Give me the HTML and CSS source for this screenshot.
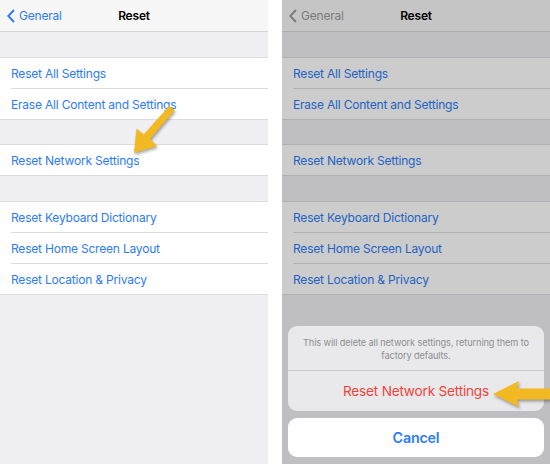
FILE: index.html
```html
<!DOCTYPE html>
<html lang="en">
<head>
    <meta charset="UTF-8">
    <meta name="viewport" content="width=device-width, initial-scale=1.0">
    <title>Reset</title>
    <link rel="stylesheet" href="styles.css">
</head>
<body>
    <div class="screens">
        <!-- before: settings list with arrow -->
        <div class="phone">
            <header class="nav">
                <a class="back" href="#">
                    <svg class="chevron" viewBox="0 0 8 14"><path d="M7 1 L1.3 7 L7 13" /></svg>
                    General
                </a>
                <h1 class="title">Reset</h1>
            </header>
            <div class="gap"></div>
            <ul class="group">
                <li>Reset All Settings</li>
                <li>Erase All Content and Settings</li>
            </ul>
            <div class="gap short"></div>
            <ul class="group">
                <li>Reset Network Settings</li>
            </ul>
            <div class="gap"></div>
            <ul class="group">
                <li>Reset Keyboard Dictionary</li>
                <li>Reset Home Screen Layout</li>
                <li>Reset Location &amp; Privacy</li>
            </ul>
            <svg class="pointer pointer-down" viewBox="125 100 55 60">
                <polygon points="169.3,105.7 174.7,110.3 150,139 157,146 134,153 136.5,128.5 143.6,134.6" />
            </svg>
        </div>

        <!-- after: action sheet open -->
        <div class="phone dimmed">
            <header class="nav">
                <a class="back" href="#">
                    <svg class="chevron" viewBox="0 0 8 14"><path d="M7 1 L1.3 7 L7 13" /></svg>
                    General
                </a>
                <h1 class="title">Reset</h1>
            </header>
            <div class="gap"></div>
            <ul class="group">
                <li>Reset All Settings</li>
                <li>Erase All Content and Settings</li>
            </ul>
            <div class="gap short"></div>
            <ul class="group">
                <li>Reset Network Settings</li>
            </ul>
            <div class="gap"></div>
            <ul class="group">
                <li>Reset Keyboard Dictionary</li>
                <li>Reset Home Screen Layout</li>
                <li>Reset Location &amp; Privacy</li>
            </ul>

            <div class="shade"></div>
            <div class="sheet">
                <div class="sheet-card">
                    <p class="sheet-message">This will delete all network settings, returning them to factory defaults.</p>
                    <button class="sheet-button danger">Reset Network Settings</button>
                </div>
                <div class="sheet-card">
                    <button class="sheet-button cancel">Cancel</button>
                </div>
            </div>
            <svg class="pointer pointer-left" viewBox="490 376 60 36">
                <polygon points="493,394 519,381 517,388.5 550,388.5 550,399.5 517,399.5 519,407" />
            </svg>
        </div>
    </div>
</body>
</html>
```

FILE: styles.css
```css
body {
    font-family: 'Inter', 'Liberation Sans', sans-serif;
    margin: 0;
    padding: 0;
    background-color: #ffffff;
}
.screens {
    display: flex;
    gap: 14px;
    height: 464px;
}
.phone {
    position: relative;
    width: 268px;
    height: 464px;
    background-color: #efeff4;
    overflow: hidden;
}
.nav {
    display: grid;
    grid-template-columns: 1fr auto 1fr;
    align-items: center;
    height: 31px;
    background-color: #f7f7f8;
    border-bottom: 1px solid #d6d6da;
}
.back {
    display: flex;
    align-items: center;
    gap: 4px;
    padding-left: 7px;
    color: #2d7cf6;
    text-decoration: none;
    font-size: 12px;
    letter-spacing: -0.2px;
}
.chevron {
    width: 8px;
    height: 14px;
    fill: none;
    stroke: #2d7cf6;
    stroke-width: 2;
}
.dimmed .back {
    color: #9a9a9c;
}
.dimmed .chevron {
    stroke: #9a9a9c;
}
.title {
    margin: 0;
    font-size: 12px;
    font-weight: 600;
    letter-spacing: -0.2px;
    color: #000000;
}
.gap {
    height: 25px;
}
.gap.short {
    height: 24px;
}
.group {
    list-style: none;
    margin: 0;
    padding: 0;
    background-color: #ffffff;
    border-top: 1px solid #dcdce0;
    border-bottom: 1px solid #dcdce0;
}
.group li {
    height: 30px;
    line-height: 32px;
    margin-left: 11px;
    font-size: 12px;
    letter-spacing: -0.2px;
    color: #2d7cf6;
}
.group li + li {
    border-top: 1px solid #dcdce0;
}
.pointer {
    position: absolute;
    fill: #f3b922;
    filter: drop-shadow(1px 2px 1.5px rgba(0, 0, 0, 0.35));
}
.pointer-down {
    left: 125px;
    top: 100px;
    width: 55px;
    height: 60px;
}
.pointer-left {
    left: 208px;
    top: 376px;
    width: 60px;
    height: 36px;
}
.shade {
    position: absolute;
    inset: 0;
    background-color: rgba(0, 0, 0, 0.2);
}
.sheet {
    position: absolute;
    left: 6px;
    right: 6px;
    bottom: 7px;
    display: flex;
    flex-direction: column;
    gap: 7px;
}
.sheet-card {
    display: flex;
    flex-direction: column;
    background-color: #e9e9eb;
    border-radius: 9px;
    overflow: hidden;
}
.sheet-card:last-child {
    background-color: #ffffff;
}
.sheet-message {
    margin: 0;
    padding: 10px 6px 8px;
    height: 26px;
    text-align: center;
    font-size: 9.2px;
    line-height: 13px;
    letter-spacing: -0.1px;
    color: #8e8e93;
    border-bottom: 1px solid #c9c9cc;
}
.sheet-button {
    height: 40px;
    border: none;
    background: none;
    font-family: inherit;
    font-size: 13.6px;
    letter-spacing: -0.2px;
}
.sheet-button.danger {
    color: #f0443a;
}
.sheet-button.cancel {
    height: 39px;
    font-size: 14.3px;
    font-weight: 600;
    color: #2d7cf6;
}
```
